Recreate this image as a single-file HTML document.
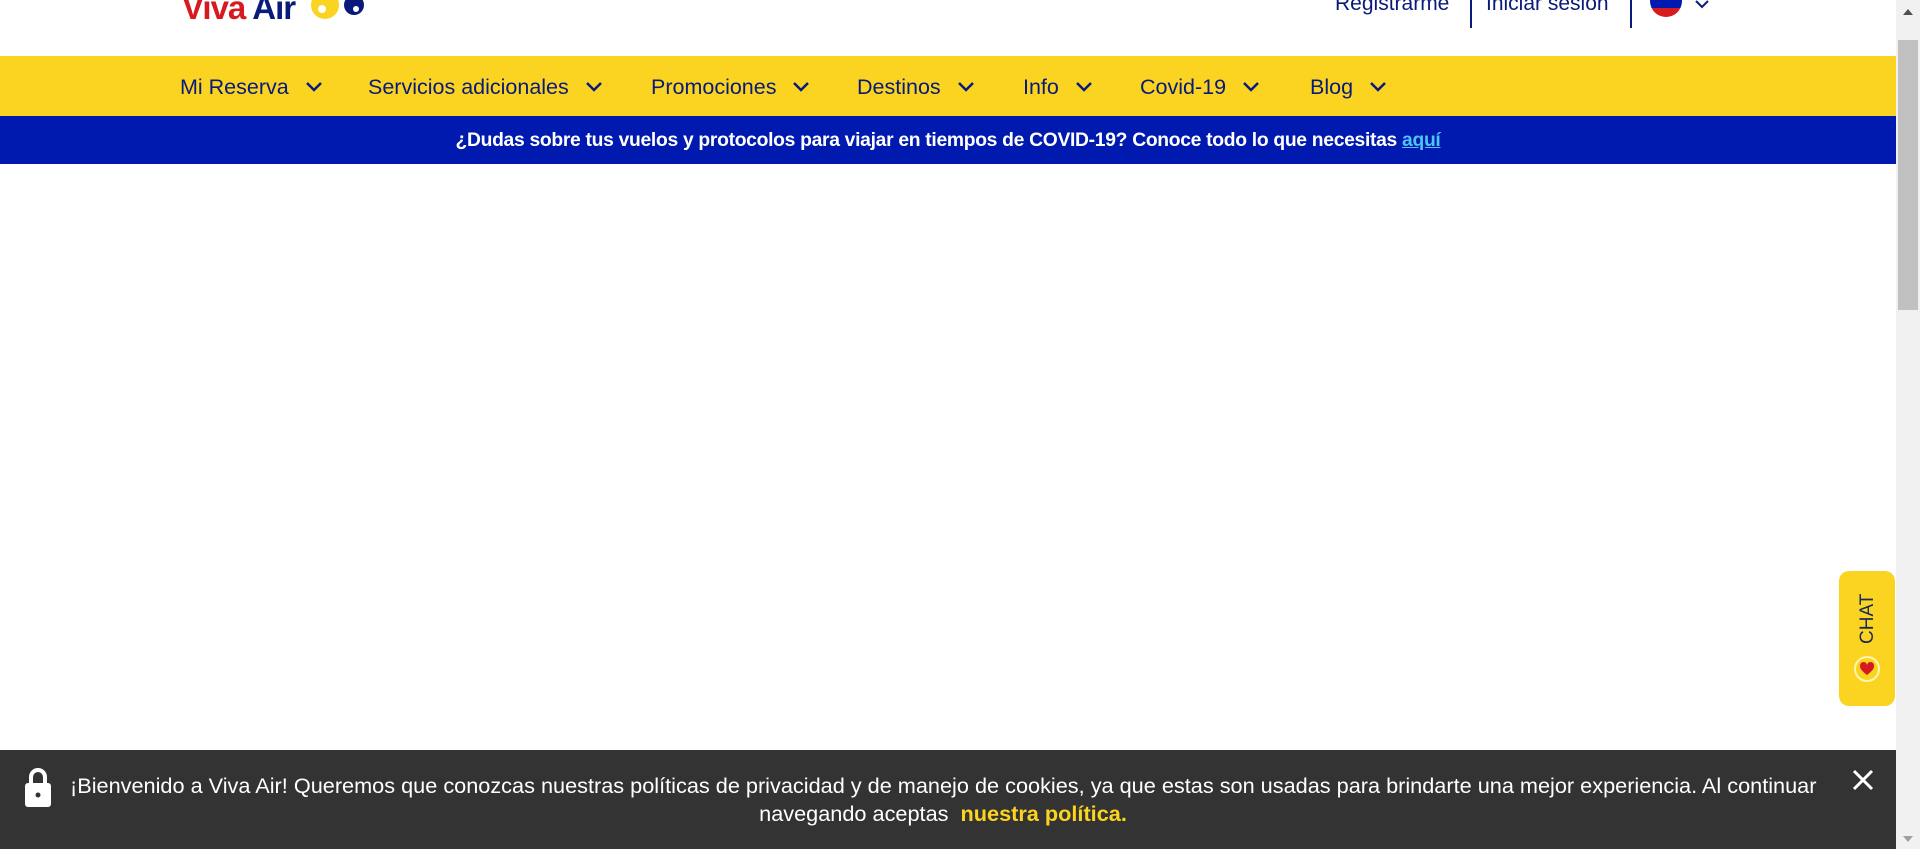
<!DOCTYPE html>
<html><head><meta charset="utf-8">
<style>
*{margin:0;padding:0;box-sizing:border-box}
html,body{width:1920px;height:849px;overflow:hidden;background:#fff;font-family:"Liberation Sans",sans-serif}
.abs{position:absolute}
.logo{left:182px;top:-11px;font-size:33px;font-weight:bold;letter-spacing:-1px;white-space:nowrap}
.top a{color:#0a1a7a;font-size:21px;text-decoration:none;white-space:nowrap}
.sep{width:1.5px;background:#0a1a7a;top:0;height:28px}
.nav{left:0;top:56px;width:1896px;height:60px;background:#fad420}
.nav span{position:absolute;top:19px;font-size:21.5px;color:#0a1a7a;white-space:nowrap}
.nav svg{vertical-align:middle;margin-left:16px;margin-top:-3px}
.blue{left:0;top:116px;width:1896px;height:48px;background:#0019ae;color:#fff;font-weight:bold;font-size:19.3px;text-align:center;line-height:50px;letter-spacing:-0.3px}
.blue u{color:#4fc3f7}
.cookie{left:0;top:750px;width:1896px;height:99px;background:#333;color:#fff;font-size:21.7px;text-align:center;line-height:28px;padding:22px 80px 0 70px;white-space:nowrap}
.cookie b{color:#fad420}
.sb{left:1896px;top:0;width:24px;height:849px;background:#f1f1f1}
.thumb{left:1898px;top:40px;width:20px;height:270px;background:#c1c1c1}
.chat{left:1839px;top:571px;width:56px;height:135px;background:#fad420;border-radius:10px}
</style></head><body>
<div class="abs logo"><span style="color:#d71920">Viva</span> <span style="color:#0a1a7a">Air</span></div>
<svg class="abs" style="left:310px;top:-8px" width="56" height="30"><circle cx="15" cy="13" r="14" fill="#fad420"/><circle cx="12" cy="17" r="4" fill="#fff"/><circle cx="44" cy="13" r="10" fill="#0a1a7a"/><circle cx="46" cy="17" r="3" fill="#fff"/></svg>
<div class="abs top" style="left:1335px;top:-8px"><a>Registrarme</a></div>
<div class="abs sep" style="left:1470px"></div>
<div class="abs top" style="left:1486px;top:-8px"><a>Iniciar sesión</a></div>
<div class="abs sep" style="left:1630px"></div>
<svg class="abs" style="left:1650px;top:-14px" width="32" height="32"><clipPath id="c"><circle cx="16" cy="15" r="16"/></clipPath><g clip-path="url(#c)"><rect x="0" y="-2" width="32" height="16" fill="#fad420"/><rect x="0" y="14" width="32" height="8" fill="#0019ae"/><rect x="0" y="22" width="32" height="12" fill="#d71920"/></g></svg>
<svg class="abs" style="left:1694px;top:0" width="16" height="10"><path d="M2 1l6 6 6-6" stroke="#0a1a7a" stroke-width="2" fill="none"/></svg>
<div class="abs nav">
<span style="left:180px">Mi Reserva<svg width="18" height="11"><path d="M2 2l7 7 7-7" stroke="#0a1a7a" stroke-width="2.5" fill="none"/></svg></span>
<span style="left:368px">Servicios adicionales<svg width="18" height="11"><path d="M2 2l7 7 7-7" stroke="#0a1a7a" stroke-width="2.5" fill="none"/></svg></span>
<span style="left:651px">Promociones<svg width="18" height="11"><path d="M2 2l7 7 7-7" stroke="#0a1a7a" stroke-width="2.5" fill="none"/></svg></span>
<span style="left:857px">Destinos<svg width="18" height="11"><path d="M2 2l7 7 7-7" stroke="#0a1a7a" stroke-width="2.5" fill="none"/></svg></span>
<span style="left:1023px">Info<svg width="18" height="11"><path d="M2 2l7 7 7-7" stroke="#0a1a7a" stroke-width="2.5" fill="none"/></svg></span>
<span style="left:1140px">Covid-19<svg width="18" height="11"><path d="M2 2l7 7 7-7" stroke="#0a1a7a" stroke-width="2.5" fill="none"/></svg></span>
<span style="left:1310px">Blog<svg width="18" height="11"><path d="M2 2l7 7 7-7" stroke="#0a1a7a" stroke-width="2.5" fill="none"/></svg></span>
</div>
<div class="abs blue">¿Dudas sobre tus vuelos y protocolos para viajar en tiempos de COVID-19? Conoce todo lo que necesitas <u>aquí</u></div>
<div class="abs chat">
<div class="abs" style="left:14px;top:15px;width:30px;height:66px;writing-mode:vertical-rl;transform:rotate(180deg);font-size:19px;color:#1a2a5a;line-height:30px;text-align:center">CHAT</div>
<svg class="abs" style="left:13px;top:83px" width="30" height="30"><circle cx="15" cy="15" r="12" fill="none" stroke="#fff6b0" stroke-width="2"/><path d="M15 21c-5-4-7-6-7-9a3 3 0 0 1 7-1 3 3 0 0 1 7 1c0 3-2 5-7 9z" fill="#d71920"/></svg>
</div>
<div class="abs cookie">¡Bienvenido a Viva Air! Queremos que conozcas nuestras políticas de privacidad y de manejo de cookies, ya que estas son usadas para brindarte una mejor experiencia. Al continuar<br>navegando aceptas &nbsp;<b>nuestra política.</b></div>
<svg class="abs" style="left:22px;top:766px" width="32" height="42"><path d="M9 18v-7a7 7 0 0 1 14 0v7" stroke="#fff" stroke-width="4" fill="none"/><rect x="3" y="17" width="26" height="24" rx="3" fill="#fff"/><circle cx="16" cy="29" r="2.5" fill="#333"/></svg>
<svg class="abs" style="left:1852px;top:769px" width="22" height="22"><path d="M2 2l18 18M20 2L2 20" stroke="#fff" stroke-width="3"/></svg>
<div class="abs sb"></div>
<div class="abs thumb"></div>
<svg class="abs" style="left:1902px;top:8px" width="12" height="8"><path d="M1 7l5-6 5 6z" fill="#505050"/></svg>
<svg class="abs" style="left:1902px;top:835px" width="12" height="8"><path d="M1 1l5 6 5-6z" fill="#a0a0a0"/></svg>
</body></html>
